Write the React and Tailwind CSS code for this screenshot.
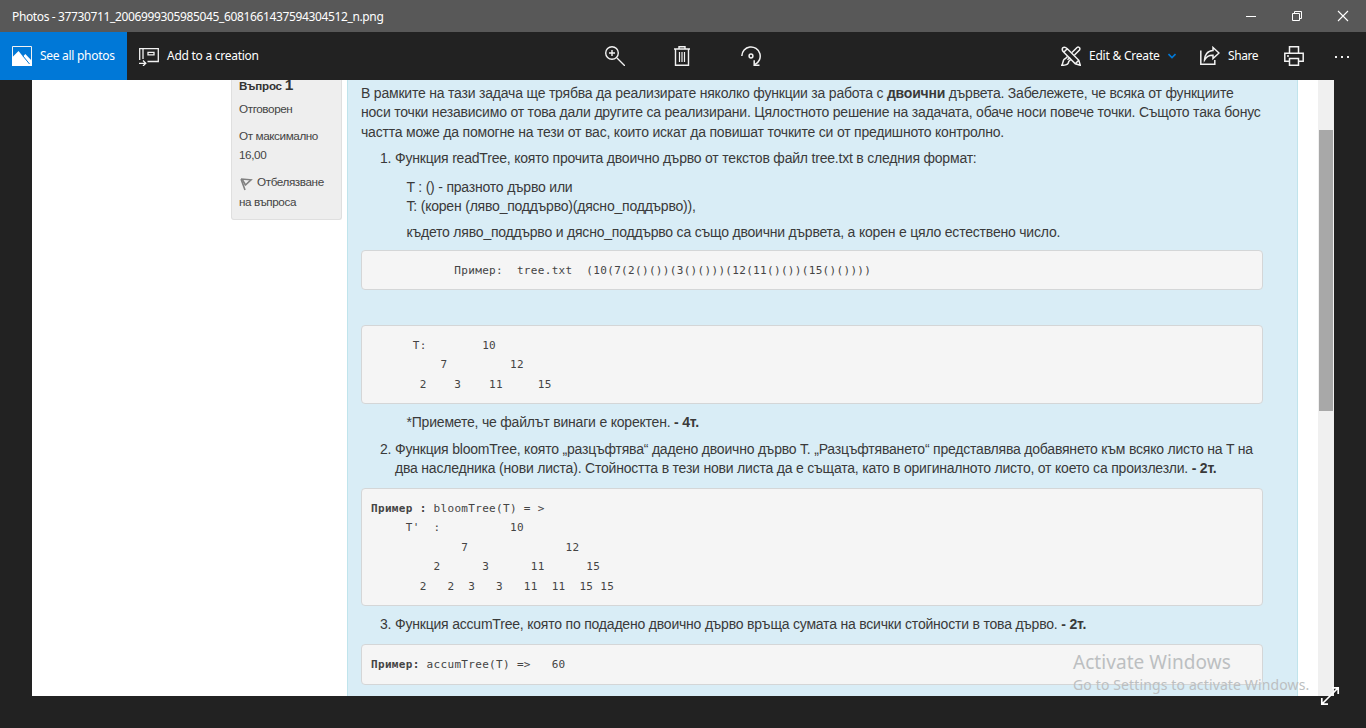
import React from "react";

const UI = "font-['Noto_Sans','Segoe_UI',sans-serif]";

function Icon({ children, size = 20, className = "", stroke = "#f2f2f2", width = 1.5 }) {
  return (
    <svg width={size} height={size} viewBox={`0 0 ${size} ${size}`} fill="none" stroke={stroke} strokeWidth={width} className={`shrink-0 ${className}`}>
      {children}
    </svg>
  );
}

function WindowButton({ children, width = 1 }) {
  return (
    <svg width="46" height="32" viewBox="0 0 46 32" fill="none" stroke="#fff" strokeWidth={width} className="shrink-0">
      {children}
    </svg>
  );
}

function TitleBar() {
  return (
    <header className="flex h-8 items-center bg-[#585858] pl-3 text-white">
      <span className="flex-1 whitespace-nowrap pt-px text-[12px] tracking-[-0.365px]">Photos - 37730711_2006999305985045_6081661437594304512_n.png</span>
      <div className="flex w-[138px]">
        <WindowButton><path d="M18 16.500h10" /></WindowButton>
        <WindowButton><path d="M18.500 13.500h7v7h-7zM20.500 13.500v-2h7v7h-2" /></WindowButton>
        <WindowButton width={1.1}><path d="M18 11l10 10M28 11l-10 10" /></WindowButton>
      </div>
    </header>
  );
}

function Toolbar() {
  return (
    <nav className="flex h-12 items-center bg-[#222] text-[12px] text-white">
      <div className="flex h-12 w-[127px] items-center gap-2 bg-[#0078d7] pl-3">
        <Icon>
          <path d="M.5 .5h19v19H.5z" strokeWidth="1" />
          <path d="M0 20V11.500L6.500 5L11 10.500L13.300 8L20 15V20Z" fill="#fff" stroke="none" />
          <path d="M11 10l6.500 8" stroke="#0078d7" strokeWidth="1" />
        </Icon>
        <span className="whitespace-nowrap tracking-[-0.29px]">See all photos</span>
      </div>
      <div className="ml-3 flex items-center gap-2">
        <Icon width={1.3}>
          <path d="M8.500 15.500H19.300V2.700H.7V14M4 3v10" />
          <path d="M9 6.300h6v2.500H9z" />
          <path d="M0 17.300h6.500M4 14.500l2.800 2.800L4 20" />
        </Icon>
        <span className="w-[92px] whitespace-nowrap tracking-[-0.26px]">Add to a creation</span>
      </div>
      <div className="ml-[346px] flex w-[156px] shrink-0 items-center justify-between">
        <Icon width={1.4}>
          <circle cx="7" cy="7" r="6.300" />
          <path d="M12 12l8 8M7 4v6M4 7h6" />
        </Icon>
        <Icon width={1.4} className="-ml-px mr-px">
          <path d="M2 3h16M3.500 3v16.300h13V3M7 3V.8h6V3" />
          <path d="M7.500 6v10M10 6v10M12.500 6v10" strokeWidth="1.200" />
        </Icon>
        <Icon width={1.5}>
          <path d="M.8 10A9.200 9.200 0 1 1 14 18.500" />
          <path d="M13.200 14.200v5.100H18.500" />
          <circle cx="10" cy="10" r="1.900" />
        </Icon>
      </div>
      <div className="ml-auto flex items-center">
        <Icon width={1.5}>
          <path d="M1.800 1.800C3.500.3 5 1.500 6.300 2.800L17.800 14.300L19.300 19.300L14.300 17.800L2.800 6.300C1.300 4.800.7 3.300 1.800 1.800ZM3 6l3-3M14.500 17.500l3-3" />
          <path d="M11 6.500L16 1.500C17.500.3 19.700 2 18.500 4L13.500 9M9 11.500l-2.500 2.300M6.500 10.500L4.500 12.500C1.500 13 2.500 17 .8 19.300C4 19.300 7.700 19 7.700 15.500L9.700 13.500" />
        </Icon>
        <span className="ml-2 w-[71px] whitespace-nowrap tracking-[-0.22px]">Edit &amp; Create</span>
        <Icon size={8} className="ml-2" stroke="#0078d7" width={1.6}><path d="M.5 2l3.500 3.500L7.500 2" /></Icon>
        <Icon className="ml-[24px]" width={1.5}>
          <path d="M.8 4.500v13.800h14V14" />
          <path d="M13 1.500l6 5.500-6 5.500V9.300C8.500 9 6 11.500 4.500 14c0-5 3-9.300 8.500-9.500Z" />
        </Icon>
        <span className="ml-2 w-[30px] whitespace-nowrap tracking-[-0.4px]">Share</span>
        <Icon className="ml-[26px]" width={1.5}>
          <path d="M5.500 7V.8h9V7M5 15.300H.8V7.200h18.400v8.100H15" />
          <path d="M5.500 12.500h9v6.700h-9zM3 10h2" />
        </Icon>
        <Icon size={16} className="ml-[30px] mr-4">
          <path d="M1 9h2M7 9h2M13 9h2" strokeWidth="2" />
        </Icon>
      </div>
    </nav>
  );
}

function Line({ children, className = "" }) {
  return <p className={`h-[19.5px] whitespace-nowrap ${className}`}>{children}</p>;
}

function Code({ children, className = "" }) {
  return (
    <pre className={`w-[902px] rounded-[4px] border border-[#d4d6d7] bg-[#f5f5f5] px-[9px] pt-[10px] font-['DejaVu_Sans_Mono',monospace] text-[11px] leading-[19.5px] tracking-[0.325px] text-[#444] ${className}`}>
      {children}
    </pre>
  );
}

function QuestionInfo() {
  return (
    <aside className="ml-[199px] h-[140px] w-[111px] rounded-b-[3px] border border-t-0 border-[#dfdfdf] bg-[#eee] pl-[7px] text-[11.7px] leading-[19.5px] tracking-[-0.4px] text-[#444]">
      <p className="-mt-[5px] h-[24px] whitespace-nowrap text-[11.6px] font-bold leading-[20px] tracking-[-0.25px] text-[#333]">Въпрос <span className="text-[15.5px]">1</span></p>
      <Line>Отговорен</Line>
      <Line className="mt-[7px]">От максимално</Line>
      <Line>16,00</Line>
      <Line className="mt-[7.5px] flex items-center">
        <Icon size={14} className="mr-[4px] mt-[5px]" stroke="#808080" width={1.6}>
          <path d="M2 2l10 .8-6 5.700M2 2l4 11" /><path d="M3.500 3l3 5" />
        </Icon>
        Отбелязване
      </Line>
      <Line>на въпроса</Line>
    </aside>
  );
}

function Question() {
  return (
    <article className="ml-[5px] w-[951px] border-x border-[#c0e4ec] bg-[#d9edf6] pl-[13px] pt-[3.5px] text-[14px] leading-[19.5px] tracking-[-0.203px] text-[#3a3a3a]">
      <Line>В рамките на тази задача ще трябва да реализирате няколко функции за работа с <b>двоични</b> дървета. Забележете, че всяка от функциите</Line>
      <Line>носи точки независимо от това дали другите са реализирани. Цялостното решение на задачата, обаче носи повече точки. Същото така бонус</Line>
      <Line>частта може да помогне на тези от вас, които искат да повишат точките си от предишното контролно.</Line>
      <Line className="ml-[19px] mt-[6.5px]">1. Функция readTree, която прочита двоично дърво от текстов файл tree.txt в следния формат:</Line>
      <Line className="ml-[45.5px] mt-[9.500px]">T : () - празното дърво или</Line>
      <Line className="ml-[45.5px]">T: (корен (ляво_поддърво)(дясно_поддърво)),</Line>
      <Line className="ml-[45.5px] mt-[6.5px]">където ляво_поддърво и дясно_поддърво са също двоични дървета, а корен е цяло естествено число.</Line>
      <Code className="mt-[7px] h-[40px]">{"            Пример:  tree.txt  (10(7(2()())(3()()))(12(11()())(15()())))"}</Code>
      <Code className="mt-[35px] h-[79px]">{"      T:        10\n          7         12\n       2    3    11     15"}</Code>
      <Line className="ml-[45.5px] mt-[9.500px]">*Приемете, че файлът винаги е коректен. <b>- 4т.</b></Line>
      <Line className="ml-[19px] mt-[7px]">2. Функция bloomTree, която „разцъфтява“ дадено двоично дърво T. „Разцъфтяването“ представлява добавянето към всяко листо на T на</Line>
      <Line className="ml-[34px]">два наследника (нови листа). Стойността в тези нови листа да е същата, като в оригиналното листо, от което са произлезли. <b>- 2т.</b></Line>
      <Code className="mt-[9px] h-[118px]">
        <b>Пример :</b><span>{" bloomTree(T) = >"}</span>
        <span className="block">{"     T'  :          10\n             7              12\n         2      3      11      15\n       2   2  3   3   11  11  15 15"}</span>
      </Code>
      <Line className="ml-[19px] mt-[9px]">3. Функция accumTree, която по подадено двоично дърво връща сумата на всички стойности в това дърво. <b>- 2т.</b></Line>
      <Code className="mt-[10px] h-[41px]"><b>Пример:</b>{" accumTree(T) =>   60"}</Code>
    </article>
  );
}

export default function App() {
  return (
    <div className={`relative h-[728px] w-[1366px] overflow-hidden bg-[#222] ${UI}`}>
      <TitleBar />
      <Toolbar />
      <main className="ml-8 flex h-[616px] w-[1302px] overflow-hidden bg-white font-['Liberation_Sans',Arial,sans-serif]">
        <QuestionInfo />
        <Question />
        <div className="ml-auto h-full w-4 bg-[#f0f0f0] px-px pt-[50px]">
          <div className="h-[281px] bg-[#a8a8a8]" />
        </div>
      </main>
      <div className="absolute left-[1073px] top-[650px] whitespace-nowrap text-[#bcbfc1]">
        <p className="h-[25px] text-[19px] leading-[25px] tracking-[0.05px]">Activate Windows</p>
        <p className="text-[14px] leading-[20px] tracking-[0.13px]">Go to Settings to activate Windows.</p>
      </div>
      <Icon className="absolute left-[1320px] top-[686px]" stroke="#fff" width={1.7}>
        <path d="M2 18L18 2M12 1.800h6.200V8M1.800 12v6.200H8" />
      </Icon>
    </div>
  );
}
